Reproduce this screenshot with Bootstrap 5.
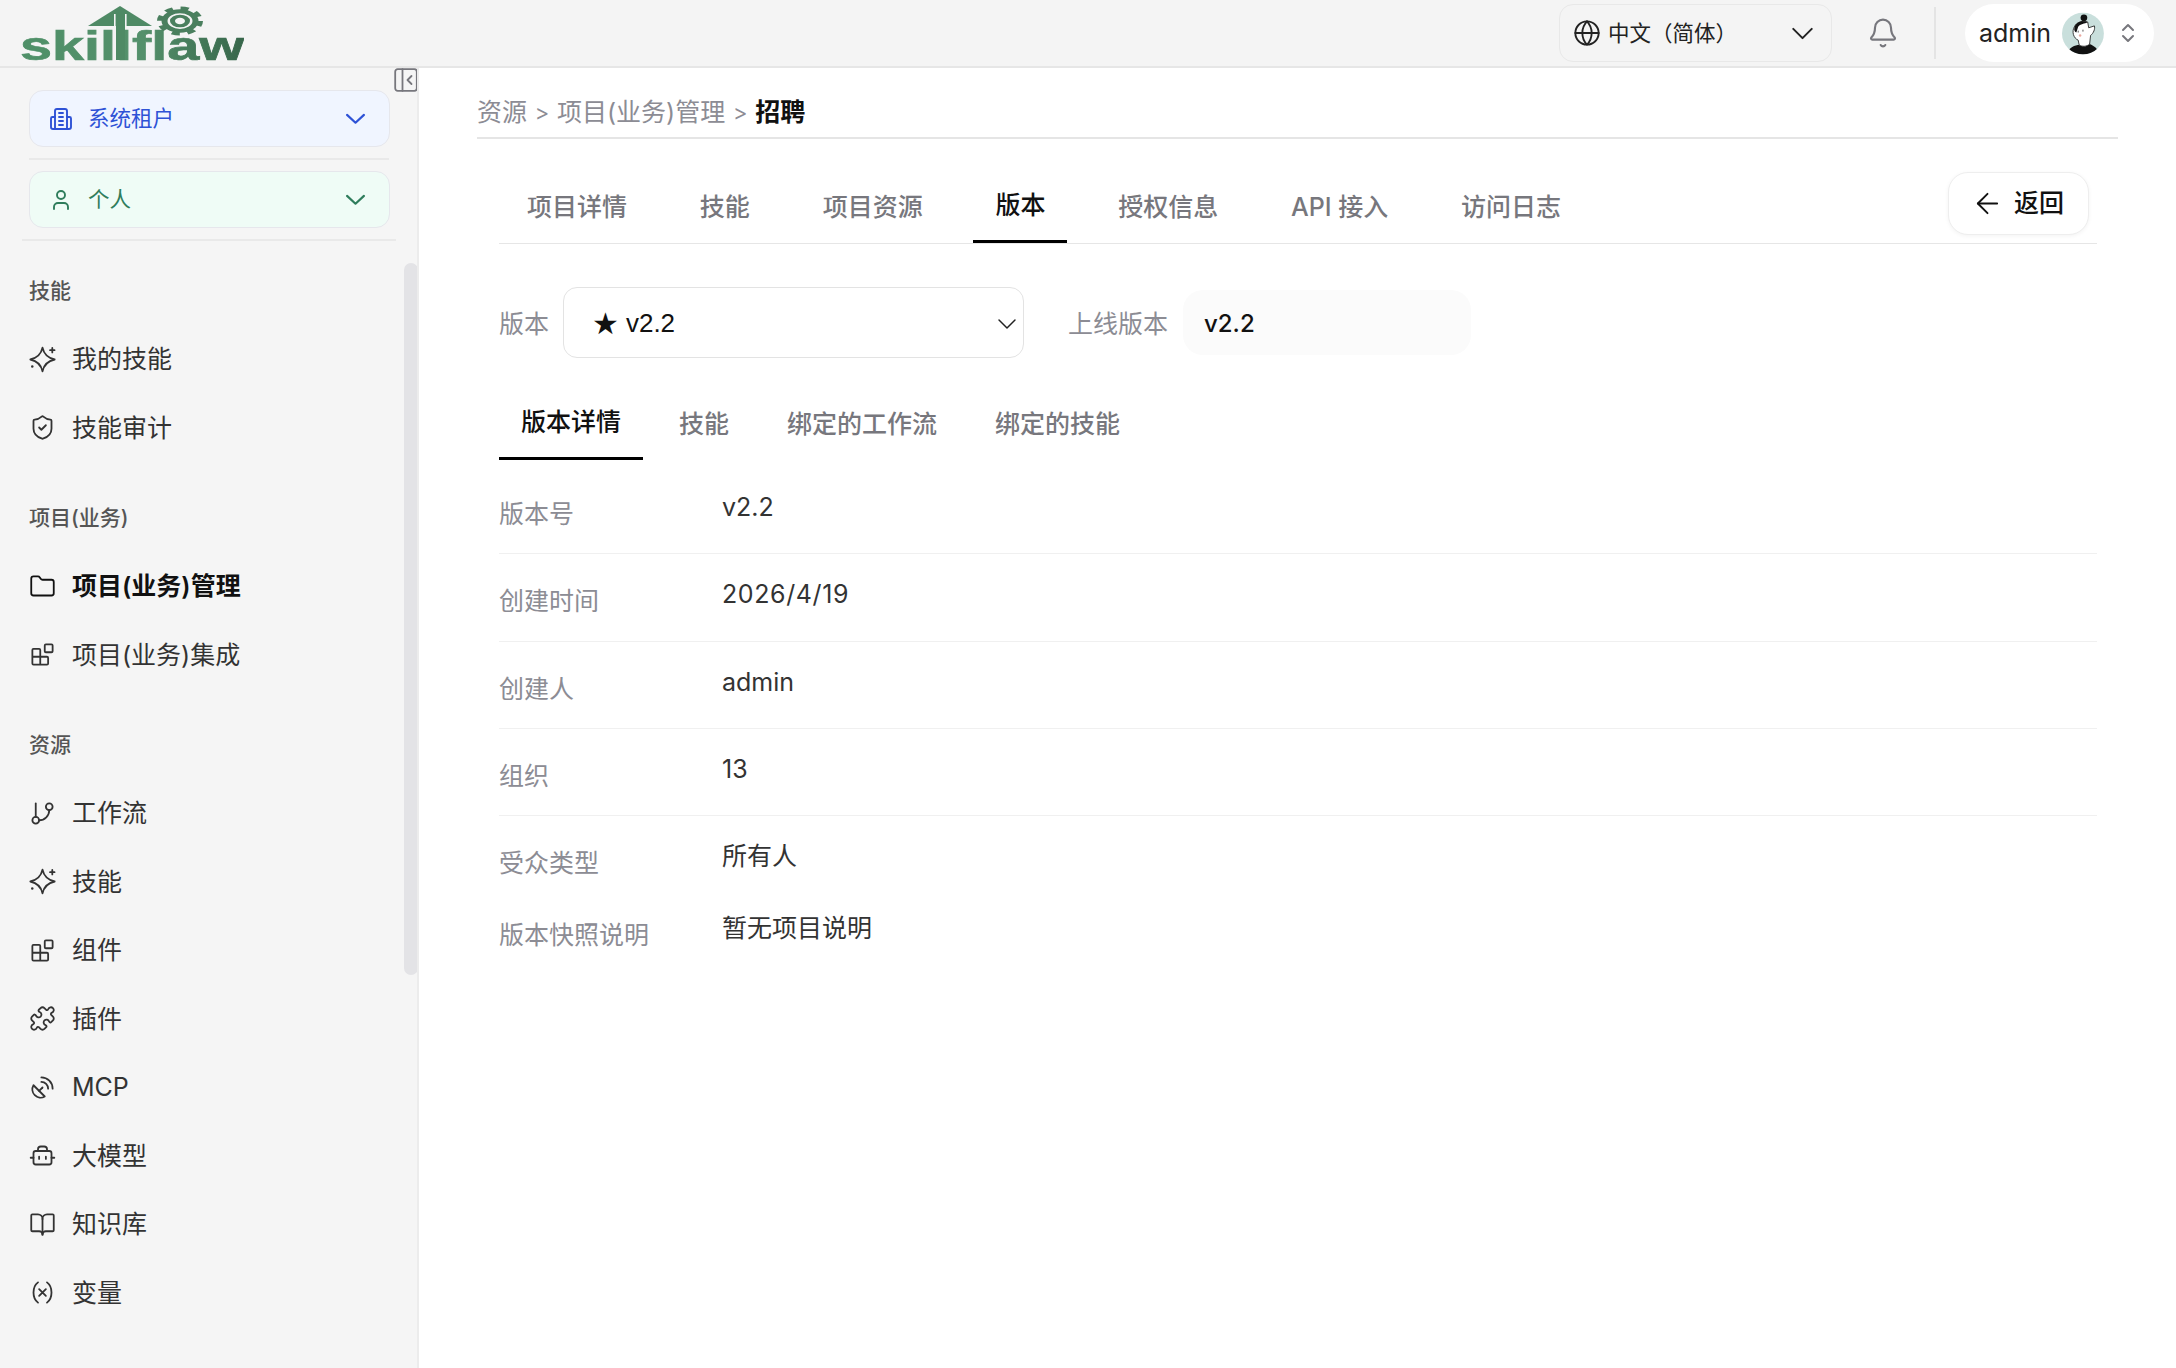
<!DOCTYPE html>
<html lang="zh-CN">
<head>
<meta charset="utf-8">
<title>skillflaw</title>
<link href="https://cdn.jsdelivr.net/npm/bootstrap@5.3.0/dist/css/bootstrap.min.css" rel="stylesheet">
<style>
html,body{height:100%;margin:0}
body{font-family:Inter,"Noto Sans CJK SC",sans-serif;font-size:25px;line-height:36px;color:#333;background:#fff;overflow:hidden;height:1368px}
svg.ico{fill:none;stroke:currentColor;stroke-width:1.6;stroke-linecap:round;stroke-linejoin:round;flex:none}
svg.ico.heavy{stroke-width:1.9}
svg.ico.fine{stroke-width:1.3}
svg.ico.mid{stroke-width:1.8}
.topbar{height:68px;background:#f4f4f4;border-bottom:2px solid #e6e6e6;padding:0 22px 0 20px;flex-wrap:nowrap;align-items:flex-start}
.logo-art{margin-top:6px;flex:none}
.top-right{height:66px}
.lang-box{width:273px;height:58px;border:1px solid #e8e8e8;border-radius:14px;padding:0 10px 0 13px;font-size:21.5px;color:#222;background:#f4f4f4}
.lang-box span{margin-left:7px}
.bell-ico{margin:0 35px 0 35px;color:#77777d}
.top-sep{width:2px;height:52px;background:#e4e4e4;margin-right:29px}
.user-pill{width:189px;height:58px;background:#fff;border-radius:29px;padding:0 14px;color:#222}
.ava{width:43px;height:43px;margin-left:11px}
.updown{margin-left:12px;color:#77777d}
.shell{height:1300px}
.side{width:419px;flex:none;background:#f5f5f5;border-right:2px solid #ececec;padding:22px 0 0 0;position:relative;overflow:hidden}
.collapse-btn{position:absolute;left:394px;top:0;width:24px;height:24px;color:#77777d}
.thumb{position:absolute;left:404px;top:195px;width:14px;height:712px;background:#e3e3e6;border-radius:7px}
.scope{margin:0 27.500px 0 29px;height:57px;border:1px solid #e6e7ec;border-radius:14px;padding:0 19px 0 19px;font-size:21.5px}
.scope-blue{background:#f0f5ff;color:#2e52d6}
.scope-green{background:#effcf6;color:#2f7d5c}
.scope span{margin-left:15px;padding-bottom:2px}
.scope .chev{margin-left:auto}
.rule-a{height:2px;background:#e9e9e9;margin:11px 28px 11px 29px}
.rule-b{height:2px;background:#e9e9e9;margin:10.500px 21px 16px 22px}
.side-group{margin-bottom:21.5px;padding-left:29px}
.side-head{height:68.5px;font-size:21px;font-weight:500;color:#555;display:flex;align-items:center}
.side-item{height:68.5px;color:#333;gap:16px;text-decoration:none}
.side-item.now{color:#111;font-weight:600}
.main{padding:26px 58px 0;min-width:0}
.crumbs{color:#8c8c94;padding-bottom:7px;border-bottom:2px solid #e5e5e5;gap:7.7px;margin:0;height:45px}
.crumbs b{color:#111;font-weight:600}
.crumb-sep{font-size:22px}
.inner{margin:37px 21px 0 22px}
.tabs-top{border-bottom:1px solid #e6e6e6;height:68px;padding-left:6px}
.tab-link{color:#77777d;font-weight:500;padding:13px 22px 15px;border-bottom:3px solid transparent;margin-right:28.8px;height:67px;font-size:25px;line-height:36px;border-radius:0}
.tab-link.on{color:#111;padding-top:11px;padding-bottom:17px;border-bottom-color:#000}
.tab-link:hover{color:#77777d}
.tab-link.on:hover{color:#111}
.back-btn{width:141px;height:63px;margin:-4px 8px 0 0;background:#fff;border:1px solid #eee;border-radius:20px;box-shadow:0 1px 4px rgba(0,0,0,.05);font-size:25px;font-weight:500;color:#111;gap:10px;padding:0 0 0 22px}
.ver-row{margin-top:43px;height:71px}
.ver-label{color:#8c8c94;padding-top:2px}
.ver-pick{width:461px;height:71px;margin:0 44px 0 14px;border:1px solid #e3e3e3;border-radius:14px;font-family:"Liberation Sans","DejaVu Sans",sans-serif;font-size:26px;color:#111;padding:2px 0 0 28px;background:#fff}
.ver-pick:hover{background:#fff;color:#111;border-color:#e3e3e3}
.ver-star{font-size:30px;line-height:36px;margin-right:7px}
.ver-chev{margin-left:auto;color:#222;stroke-width:1.1!important}
.live-box{width:288px;height:65px;margin-left:15px;background:#fbfbfb;border-radius:20px;padding:2px 0 0 21px;color:#111;font-weight:500;font-size:24px}
.tabs-sub{margin-top:42px;height:60px}
.sub-link{color:#77777d;font-weight:500;padding:6px 22px 15px;border-bottom:3px solid transparent;margin-right:14px;height:60px;font-size:25px;line-height:36px;border-radius:0}
.sub-link.on{color:#111;padding-top:4px;padding-bottom:17px;border-bottom-color:#000}
.sub-link:hover{color:#77777d}
.sub-link.on:hover{color:#111}
.facts{margin-top:7px}
.fact{padding:22px 0 21.3px;border-bottom:1px solid #f0f0f0}
.fact.plain{border-bottom:0;padding-bottom:7px}
.fact-k{width:223px;flex:none;color:#8c8c94;margin-top:7px}
.fact-v{color:#333}
.fact-date{letter-spacing:.6px}
</style>
</head>
<body>
<header class="navbar topbar d-flex">
  <svg width="224" height="63" viewBox="0 0 224 63" class="logo-art" role="img" aria-label="skillflaw">
    <defs><linearGradient id="lg" x1="0" x2="1" y1="0" y2="0"><stop offset="0" stop-color="#4f9068"/><stop offset="0.55" stop-color="#54906b"/><stop offset="1" stop-color="#37664a"/></linearGradient></defs>
    <polygon points="100,0 132,20 68,20" fill="#4f8a65"/>
    <rect x="94" y="8" width="1.6" height="46" fill="#f4f4f4"/>
    <rect x="105" y="8" width="1.6" height="46" fill="#f4f4f4"/>
    <text x="0" y="54" font-family="Liberation Sans" font-weight="700" font-size="41" textLength="224" lengthAdjust="spacingAndGlyphs" fill="url(#lg)" stroke="url(#lg)" stroke-width=".7">skillflaw</text>
    <rect x="96" y="12" width="9" height="42" fill="#4f8a65"/>
    <g transform="translate(160 15) scale(1 .63)" fill="none" stroke="#4a7f5e">
      <circle r="20" stroke-width="6" stroke-dasharray="8 7.700"/>
      <circle r="15.500" stroke-width="6"/>
      <circle r="7.500" stroke-width="5"/>
    </g>
  </svg>
  <div class="top-right ms-auto d-flex align-items-center">
    <div class="lang-box d-flex align-items-center">
      <svg class="ico" width="28" height="28" viewBox="0 0 24 24"><circle cx="12" cy="12" r="10"/><path d="M12 2a14.500 14.500 0 0 0 0 20 14.500 14.500 0 0 0 0-20"/><path d="M2 12h20"/></svg>
      <span>中文（简体）</span>
      <svg class="ico fine ms-auto" width="37" height="37" viewBox="0 0 24 24"><path d="m6 9 6 6 6-6"/></svg>
    </div>
    <svg class="ico bell-ico" width="32" height="32" viewBox="0 0 24 24"><path d="M10.268 21a2 2 0 0 0 3.464 0"/><path d="M3.262 15.326A1 1 0 0 0 4 17h16a1 1 0 0 0 .74-1.673C19.41 13.956 18 12.499 18 8A6 6 0 0 0 6 8c0 4.499-1.411 5.956-2.738 7.326"/></svg>
    <div class="top-sep"></div>
    <div class="user-pill d-flex align-items-center">
      <span>admin</span>
      <svg class="ava" viewBox="0 0 44 44">
        <defs><clipPath id="av"><circle cx="22" cy="22" r="22"/></clipPath></defs>
        <g clip-path="url(#av)">
          <rect width="44" height="44" fill="#c9dfdc"/>
          <path d="M5 44C7 36 14 34 18 34C21 36 26 36 29 33C34 35 38 38 39 44Z" fill="#111"/>
          <path d="M13 15C15 10 22 8 27 10L28 16L34 14C35 17 33 22 30 24L29 33C26 36 21 36 18 34L17 29C12 27 10 20 13 15Z" fill="#fff" stroke="#222" stroke-width=".9"/>
          <path d="M13 16C14 10 21 7.500 27 10C24 12 19 12 17 15L15 21C13 20 12.500 18 13 16Z" fill="#111"/>
          <circle cx="23" cy="5.500" r="3.500" fill="#111"/>
          <circle cx="19" cy="24" r="1.300" fill="#e9a9a0"/>
          <path d="M17 19v2M22 18v2" stroke="#222" stroke-width=".8" fill="none"/>
        </g>
      </svg>
      <svg class="ico updown" width="24" height="24" viewBox="0 0 24 24" style="stroke-width:2"><path d="m7 15 5 5 5-5"/><path d="m7 9 5-5 5 5"/></svg>
    </div>
  </div>
</header>
<div class="shell d-flex">
  <aside class="side">
    <svg class="collapse-btn ico mid" viewBox="0 0 24 24"><rect x="1.200" y="1.200" width="21.600" height="21.600" rx="2.500"/><path d="M8.500 1.200v21.600"/><path d="m17.500 8-4 4 4 4"/></svg>
    <div class="thumb"></div>
    <div class="scope scope-blue d-flex align-items-center">
      <svg class="ico heavy" width="24" height="24" viewBox="0 0 24 24"><path d="M6 22V4a2 2 0 0 1 2-2h8a2 2 0 0 1 2 2v18"/><path d="M6 10H3.500A1.500 1.500 0 0 0 2 11.500V20a2 2 0 0 0 2 2h16a2 2 0 0 0 2-2v-8.500A1.500 1.500 0 0 0 20.500 10H18"/><path d="M10 6h4M10 10h4M10 14h4M10 18h4"/></svg>
      <span>系统租户</span>
      <svg class="ico mid chev" width="29" height="29" viewBox="0 0 24 24"><path d="m5 9 7 6.500 7-6.500"/></svg>
    </div>
    <div class="rule-a"></div>
    <div class="scope scope-green d-flex align-items-center">
      <svg class="ico heavy" width="24" height="24" viewBox="0 0 24 24"><path d="M19 21v-2a4 4 0 0 0-4-4H9a4 4 0 0 0-4 4v2"/><circle cx="12" cy="7" r="4"/></svg>
      <span>个人</span>
      <svg class="ico mid chev" width="29" height="29" viewBox="0 0 24 24"><path d="m5 9 7 6.500 7-6.500"/></svg>
    </div>
    <div class="rule-b"></div>

    <div class="side-group">
      <div class="side-head">技能</div>
      <a class="side-item d-flex align-items-center" href="#">
        <svg class="ico" width="27" height="27" viewBox="0 0 24 24"><path d="M12 1.500Q13.800 10 22.800 12Q13.800 14 12 22.500Q10.200 14 1.200 12Q10.200 10 12 1.500Z"/><path d="M20.700 1.700v4M18.700 3.700h4"/><path d="M2.900 18.300h.01" stroke-width="2.200"/></svg>
        <span>我的技能</span></a>
      <a class="side-item d-flex align-items-center" href="#">
        <svg class="ico" width="27" height="27" viewBox="0 0 24 24"><path d="M20 13c0 5-3.500 7.500-7.660 8.950a1 1 0 0 1-.67-.01C7.500 20.500 4 18 4 13V6a1 1 0 0 1 1-1c2 0 4.500-1.200 6.240-2.720a1.170 1.170 0 0 1 1.520 0C14.510 3.810 17 5 19 5a1 1 0 0 1 1 1z"/><path d="m9 12 2 2 4-4"/></svg>
        <span>技能审计</span></a>
    </div>

    <div class="side-group">
      <div class="side-head">项目(业务)</div>
      <a class="side-item now d-flex align-items-center" href="#">
        <svg class="ico" width="27" height="27" viewBox="0 0 24 24"><path d="M20 20a2 2 0 0 0 2-2V8a2 2 0 0 0-2-2h-7.900a2 2 0 0 1-1.690-.9L9.600 3.900A2 2 0 0 0 7.930 3H4a2 2 0 0 0-2 2v13a2 2 0 0 0 2 2Z"/></svg>
        <span>项目(业务)管理</span></a>
      <a class="side-item d-flex align-items-center" href="#">
        <svg class="ico" width="27" height="27" viewBox="0 0 24 24"><rect x="14" y="3" width="7" height="7" rx="1"/><path d="M10 21V8a1 1 0 0 0-1-1H4a1 1 0 0 0-1 1v12a1 1 0 0 0 1 1h12a1 1 0 0 0 1-1v-5a1 1 0 0 0-1-1H3"/></svg>
        <span>项目(业务)集成</span></a>
    </div>

    <div class="side-group">
      <div class="side-head">资源</div>
      <a class="side-item d-flex align-items-center" href="#">
        <svg class="ico" width="27" height="27" viewBox="0 0 24 24"><path d="M6 3v12"/><circle cx="18" cy="6" r="3"/><circle cx="6" cy="18" r="3"/><path d="M18 9a9 9 0 0 1-9 9"/></svg>
        <span>工作流</span></a>
      <a class="side-item d-flex align-items-center" href="#">
        <svg class="ico" width="27" height="27" viewBox="0 0 24 24"><path d="M12 1.500Q13.800 10 22.800 12Q13.800 14 12 22.500Q10.200 14 1.200 12Q10.200 10 12 1.500Z"/><path d="M20.700 1.700v4M18.700 3.700h4"/><path d="M2.900 18.300h.01" stroke-width="2.200"/></svg>
        <span>技能</span></a>
      <a class="side-item d-flex align-items-center" href="#">
        <svg class="ico" width="27" height="27" viewBox="0 0 24 24"><rect x="14" y="3" width="7" height="7" rx="1"/><path d="M10 21V8a1 1 0 0 0-1-1H4a1 1 0 0 0-1 1v12a1 1 0 0 0 1 1h12a1 1 0 0 0 1-1v-5a1 1 0 0 0-1-1H3"/></svg>
        <span>组件</span></a>
      <a class="side-item d-flex align-items-center" href="#">
        <svg class="ico" width="27" height="27" viewBox="0 0 24 24"><path d="M19.439 7.850c-.049.322.059.648.289.878l1.568 1.568c.47.47.706 1.087.706 1.704s-.235 1.233-.706 1.704l-1.611 1.611a.98.98 0 0 1-.837.276c-.47-.07-.802-.48-.968-.925a2.501 2.501 0 1 0-3.214 3.214c.446.166.855.497.925.968a.979.979 0 0 1-.276.837l-1.610 1.610a2.404 2.404 0 0 1-1.705.707 2.402 2.402 0 0 1-1.704-.706l-1.568-1.568a1.026 1.026 0 0 0-.877-.29c-.493.074-.84.504-1.020.968a2.500 2.500 0 1 1-3.237-3.237c.464-.18.894-.527.967-1.020a1.026 1.026 0 0 0-.289-.877l-1.568-1.568A2.402 2.402 0 0 1 1.998 12c0-.617.236-1.234.706-1.704L4.230 8.770c.24-.24.581-.353.917-.303.515.077.877.528 1.073 1.010a2.500 2.500 0 1 0 3.259-3.259c-.482-.196-.933-.558-1.010-1.073-.05-.336.062-.676.303-.917l1.525-1.525A2.402 2.402 0 0 1 12 1.998c.617 0 1.234.236 1.704.706l1.568 1.568c.23.23.556.338.877.29.493-.074.84-.504 1.020-.968a2.500 2.500 0 1 1 3.237 3.237c-.464.18-.894.527-.967 1.020Z"/></svg>
        <span>插件</span></a>
      <a class="side-item d-flex align-items-center" href="#">
        <svg class="ico" width="27" height="27" viewBox="0 0 24 24"><path d="M4 10a7.310 7.310 0 0 0 10 10Z"/><path d="m9 15 3-3"/><path d="M17 13a6 6 0 0 0-6-6"/><path d="M21 13A10 10 0 0 0 11 3"/></svg>
        <span>MCP</span></a>
      <a class="side-item d-flex align-items-center" href="#">
        <svg class="ico" width="27" height="27" viewBox="0 0 24 24"><path d="M8 8V6.500A2.500 2.500 0 0 1 10.500 4h3A2.500 2.500 0 0 1 16 6.500V8"/><rect x="4" y="8" width="16" height="12" rx="2"/><path d="M1.500 14H4M20 14h2.500M15 13v2M9 13v2"/></svg>
        <span>大模型</span></a>
      <a class="side-item d-flex align-items-center" href="#">
        <svg class="ico" width="27" height="27" viewBox="0 0 24 24"><path d="M12 7v14"/><path d="M3 18a1 1 0 0 1-1-1V4a1 1 0 0 1 1-1h5a4 4 0 0 1 4 4 4 4 0 0 1 4-4h5a1 1 0 0 1 1 1v13a1 1 0 0 1-1 1h-6a3 3 0 0 0-3 3 3 3 0 0 0-3-3z"/></svg>
        <span>知识库</span></a>
      <a class="side-item d-flex align-items-center" href="#">
        <svg class="ico" width="27" height="27" viewBox="0 0 24 24"><path d="M8 21s-4-3-4-9 4-9 4-9"/><path d="M16 3s4 3 4 9-4 9-4 9"/><path d="M15 9l-6 6M9 9l6 6"/></svg>
        <span>变量</span></a>
    </div>
  </aside>

  <main class="main flex-grow-1">
    <div class="crumbs d-flex align-items-start"><span>资源</span><span class="crumb-sep">&gt;</span><span>项目(业务)管理</span><span class="crumb-sep">&gt;</span><b>招聘</b></div>
    <div class="inner">
      <div class="tabs-top d-flex align-items-start">
        <ul class="nav flex-nowrap">
          <li class="nav-item"><a class="nav-link tab-link" href="#">项目详情</a></li>
          <li class="nav-item"><a class="nav-link tab-link" href="#">技能</a></li>
          <li class="nav-item"><a class="nav-link tab-link" href="#">项目资源</a></li>
          <li class="nav-item"><a class="nav-link tab-link on" href="#">版本</a></li>
          <li class="nav-item"><a class="nav-link tab-link" href="#">授权信息</a></li>
          <li class="nav-item"><a class="nav-link tab-link" href="#">API 接入</a></li>
          <li class="nav-item"><a class="nav-link tab-link" href="#">访问日志</a></li>
        </ul>
        <button type="button" class="btn back-btn ms-auto d-flex align-items-center">
          <svg class="ico" width="33" height="33" viewBox="0 0 24 24" style="stroke-width:1.4"><path d="m12 19-7-7 7-7"/><path d="M19 12H5"/></svg>
          <span>返回</span>
        </button>
      </div>

      <div class="ver-row d-flex align-items-center">
        <span class="ver-label">版本</span>
        <button type="button" class="btn ver-pick d-flex align-items-center">
          <span class="ver-star">★</span><span>v2.2</span>
          <svg class="ico ver-chev" width="32" height="32" viewBox="0 0 24 24"><path d="m6 9 6 6 6-6"/></svg>
        </button>
        <span class="ver-label">上线版本</span>
        <div class="live-box d-flex align-items-center">v2.2</div>
      </div>

      <ul class="nav tabs-sub flex-nowrap">
        <li class="nav-item"><a class="nav-link sub-link on" href="#">版本详情</a></li>
        <li class="nav-item"><a class="nav-link sub-link" href="#">技能</a></li>
        <li class="nav-item"><a class="nav-link sub-link" href="#">绑定的工作流</a></li>
        <li class="nav-item"><a class="nav-link sub-link" href="#">绑定的技能</a></li>
      </ul>

      <div class="facts">
        <div class="fact d-flex"><div class="fact-k">版本号</div><div class="fact-v">v2.2</div></div>
        <div class="fact d-flex"><div class="fact-k">创建时间</div><div class="fact-v fact-date">2026/4/19</div></div>
        <div class="fact d-flex"><div class="fact-k">创建人</div><div class="fact-v">admin</div></div>
        <div class="fact d-flex"><div class="fact-k">组织</div><div class="fact-v">13</div></div>
        <div class="fact plain d-flex"><div class="fact-k">受众类型</div><div class="fact-v">所有人</div></div>
        <div class="fact plain d-flex"><div class="fact-k">版本快照说明</div><div class="fact-v">暂无项目说明</div></div>
      </div>
    </div>
  </main>
</div>
<script src="https://cdn.jsdelivr.net/npm/bootstrap@5.3.0/dist/js/bootstrap.bundle.min.js"></script>
</body>
</html>
